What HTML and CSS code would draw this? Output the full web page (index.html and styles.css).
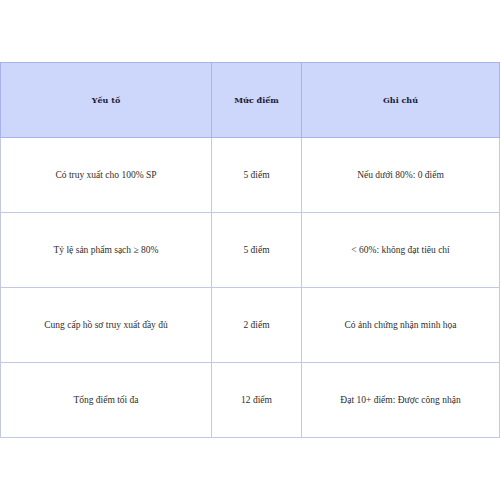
FILE: index.html
```html
<!DOCTYPE html>
<html lang="vi">
<head>
<meta charset="utf-8">
<link rel="stylesheet" href="styles.css">
</head>
<body>
<div class="page">
<table class="score">
<colgroup><col class="c1"><col class="c2"><col class="c3"></colgroup>
<thead>
<tr><th>Yếu tố</th><th>Mức điểm</th><th>Ghi chú</th></tr>
</thead>
<tbody>
<tr><td>Có truy xuất cho 100% SP</td><td>5 điểm</td><td>Nếu dưới 80%: 0 điểm</td></tr>
<tr><td>Tỷ lệ sản phẩm sạch ≥ 80%</td><td>5 điểm</td><td>&lt; 60%: không đạt tiêu chí</td></tr>
<tr><td>Cung cấp hồ sơ truy xuất đầy đủ</td><td>2 điểm</td><td>Có ảnh chứng nhận minh họa</td></tr>
<tr><td>Tổng điểm tối đa</td><td>12 điểm</td><td>Đạt 10+ điểm: Được công nhận</td></tr>
</tbody>
</table>
</div>
</body>
</html>
```
FILE: styles.css
```css
html, body {
  margin: 0;
  padding: 0;
  background: #ffffff;
}
.page {
  padding-top: 62px;
}
.score {
  width: 499px;
  border-collapse: collapse;
  table-layout: fixed;
  font-family: "Liberation Serif", "DejaVu Serif", serif;
  font-size: 9.5px;
  color: #2e2e2e;
  border: 1px solid #a9b3e6;
}
.c1 { width: 211px; }
.c2 { width: 90px; }
.c3 { width: 198px; }
.score th {
  background: #cdd6fb;
  height: 74px;
  padding: 0;
  font-family: "DejaVu Serif", "Liberation Serif", serif;
  font-size: 8px;
  font-weight: bold;
  color: #1c1c33;
  border: 1px solid #a9b3e6;
  text-align: center;
}
.score td {
  height: 74px;
  padding: 0;
  text-align: center;
  border: 1px solid #c3c9e3;
}
```
